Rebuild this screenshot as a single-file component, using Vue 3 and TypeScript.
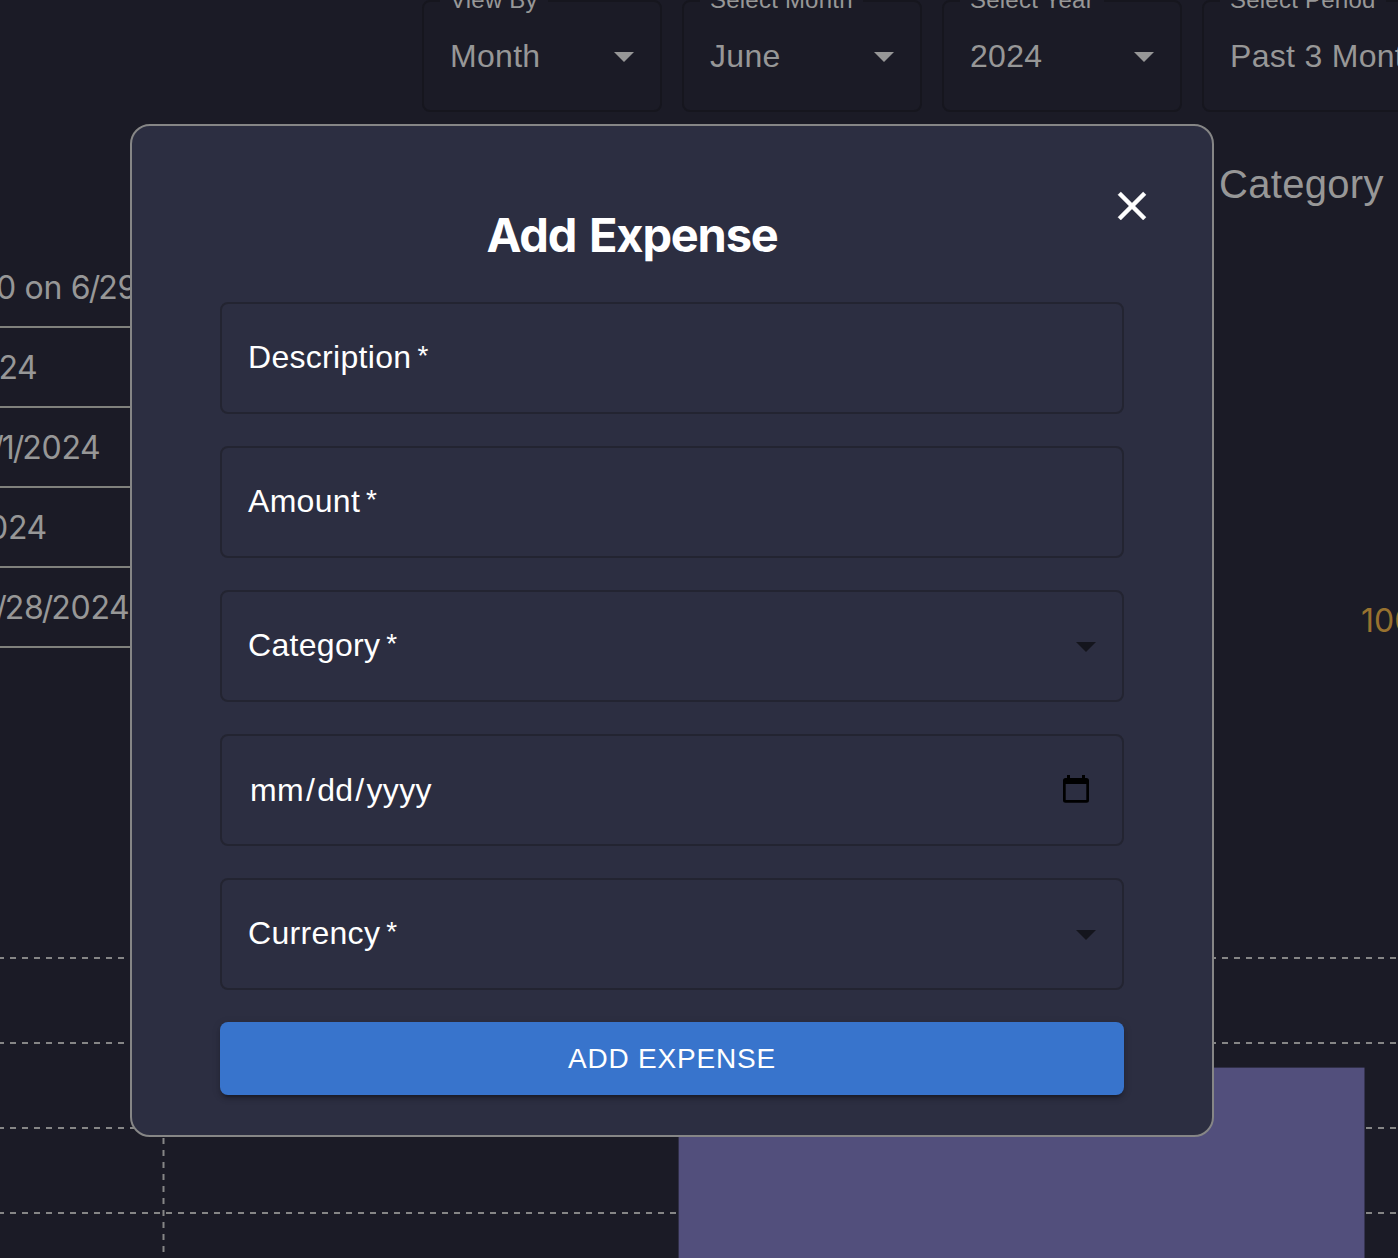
<script setup lang="ts">
interface Filter {
  label: string
  value: string
}

interface Field {
  label: string
  kind: 'text' | 'select' | 'date'
}

const filters: Filter[] = [
  { label: 'View By', value: 'Month' },
  { label: 'Select Month', value: 'June' },
  { label: 'Select Year', value: '2024' },
  { label: 'Select Period', value: 'Past 3 Months' },
]

const expenses = [
  { text: '0 on 6/29/2024', end: 223 },
  { text: '24', end: 37.5 },
  { text: '/1/2024', end: 100.5 },
  { text: '2024', end: 47 },
  { text: '/28/2024', end: 129.5 },
]

const fields: Field[] = [
  { label: 'Description', kind: 'text' },
  { label: 'Amount', kind: 'text' },
  { label: 'Category', kind: 'select' },
  { label: 'mm/dd/yyyy', kind: 'date' },
  { label: 'Currency', kind: 'select' },
]

const gridLines = [1, 86, 171, 256]

// Splits a date into alternating numbers and separators.
const parts = (text: string) => text.split(/(\/)/).filter(Boolean)
</script>

<template>
  <div class="page">
    <div class="filters">
      <div v-for="f in filters" :key="f.label" class="filter">
        <span class="filter-label">{{ f.label }}</span>
        <span>{{ f.value }}</span>
        <svg class="caret" viewBox="0 0 24 24"><path d="M7 10l5 5 5-5z" /></svg>
      </div>
    </div>

    <div class="middle">
      <ul class="expenses">
        <li v-for="e in expenses" :key="e.text">
          <span class="expense-text" :style="{ width: e.end + 'px' }"><span v-for="(p, i) in parts(e.text)" :key="i" :class="{ slash: p === '/' }">{{ p }}</span></span>
        </li>
      </ul>
      <div class="breakdown">
        <h6>Category</h6>
        <div class="slice-value">100</div>
      </div>
    </div>

    <svg class="chart" width="1398" height="301" viewBox="0 0 1398 301">
      <g stroke="#868686" stroke-width="2" stroke-dasharray="6 6">
        <line v-for="y in gridLines" :key="y" x1="-2" :y1="y" x2="1400" :y2="y" />
        <line x1="163.5" y1="1" x2="163.5" y2="301" />
      </g>
      <rect x="678.6" y="110.6" width="685.9" height="200" fill="#524f7c" />
    </svg>

    <section class="modal">
      <header>
        <h2>Add Expense</h2>
        <button class="close" type="button" aria-label="Close">
          <svg viewBox="0 0 24 24"><path d="M19 6.41 17.59 5 12 10.59 6.41 5 5 6.41 10.59 12 5 17.59 6.41 19 12 13.41 17.59 19 19 17.59 13.41 12z" /></svg>
        </button>
      </header>
      <form @submit.prevent>
        <div v-for="f in fields" :key="f.label" class="field" :class="f.kind">
          <span v-if="f.kind === 'date'"><span v-for="(p, i) in parts(f.label)" :key="i" :class="{ divider: p === '/' }">{{ p }}</span></span>
          <span v-else class="label">{{ f.label }}<i>*</i></span>
          <svg v-if="f.kind === 'select'" class="caret" viewBox="0 0 24 24"><path d="M7 10l5 5 5-5z" /></svg>
          <svg v-if="f.kind === 'date'" class="calendar" viewBox="0 0 26 28">
            <path fill-rule="evenodd" d="M4 0h3v3h12V0h3v3h1.500A2.500 2.500 0 0 1 26 5.500V25.200A2.500 2.500 0 0 1 23.500 27.700H2.500A2.500 2.500 0 0 1 0 25.200V5.500A2.500 2.500 0 0 1 2.500 3H4zM2.700 9v16h20.600V9z" />
          </svg>
        </div>
        <button class="submit" type="submit">ADD EXPENSE</button>
      </form>
    </section>
  </div>
</template>

<style>
body {
  margin: 0;
  background: #1b1b26;
}
</style>

<style scoped>
.page {
  position: relative;
  width: 1398px;
  height: 1258px;
  overflow: hidden;
  background: #1b1b26;
  color: #979797;
  font: 32px/46px "Liberation Sans", Arial, sans-serif;
  letter-spacing: 0.3px;
  white-space: nowrap;
}
.filters {
  display: flex;
  gap: 20px;
  padding-left: 422px;
}
.filter {
  position: relative;
  box-sizing: border-box;
  flex: none;
  width: 240px;
  height: 112px;
  border: 2px solid #16161e;
  border-radius: 8px;
  display: flex;
  align-items: center;
  justify-content: space-between;
  padding: 0 12px 0 26px;
}
.filter-label {
  position: absolute;
  left: 16px;
  top: -18px;
  padding: 0 10px;
  background: #1b1b26;
  font-size: 24px;
  line-height: 32px;
  letter-spacing: 0.22px;
}
.caret {
  flex: none;
  width: 48px;
  height: 48px;
  fill: currentColor;
}
.middle {
  display: flex;
  justify-content: space-between;
  height: 845px;
}
.expenses {
  list-style: none;
  margin: 0;
  padding: 136px 0 0;
  width: 600px;
  font-family: Inter, sans-serif;
  letter-spacing: -0.3px;
}
.expenses li {
  box-sizing: border-box;
  height: 80px;
  padding-top: 2px;
  border-bottom: 2px solid #80817c;
  display: flex;
  align-items: center;
}
.expense-text {
  display: flex;
  justify-content: flex-end;
  white-space: pre;
}
.slash {
  margin: 0 -1.7px;
}
.breakdown {
  width: 179px;
  display: flex;
  flex-direction: column;
}
h6 {
  margin: 48px 0 0;
  font-size: 40px;
  line-height: 48px;
  font-weight: 400;
  letter-spacing: 0.3px;
}
.slice-value {
  margin: 390px 0 0 142px;
  font-family: Inter, sans-serif;
  letter-spacing: 0;
  color: #98722f;
}
.chart {
  display: block;
}
.modal {
  position: absolute;
  left: 130px;
  top: 124px;
  box-sizing: border-box;
  width: 1084px;
  height: 1013px;
  padding: 40px;
  border: 2px solid #868686;
  border-radius: 20px;
  background: #2c2e41;
  color: #fff;
}
header {
  display: flex;
  align-items: flex-start;
  height: 136px;
}
h2 {
  flex: 1;
  margin: 39px 0 0;
  text-align: center;
  font: 680 47px/59px Inter, sans-serif;
  letter-spacing: -1.2px;
  word-spacing: 3px;
}
.close {
  width: 80px;
  height: 80px;
  padding: 16px;
  border: 0;
  background: none;
}
.close svg {
  display: block;
  width: 48px;
  height: 48px;
  fill: #fff;
  stroke: #fff;
  stroke-width: 0.25;
}
form {
  display: flex;
  flex-direction: column;
  gap: 32px;
  padding: 0 48px;
}
.field {
  box-sizing: border-box;
  height: 112px;
  border: 2px solid #232431;
  border-radius: 8px;
  padding: 0 12px 0 26px;
  display: flex;
  align-items: center;
  justify-content: space-between;
}
.label {
  padding-bottom: 2px;
}
.field i {
  margin-left: 6px;
  font-size: 28px;
  font-style: normal;
  line-height: 1;
  vertical-align: 3px;
}
.field .caret {
  color: #14151d;
}
.field.date {
  padding: 0 33px 0 28px;
}
.divider {
  margin: 0 2px;
}
.calendar {
  width: 26px;
  height: 28px;
  margin-bottom: 2px;
  fill: #000;
}
.submit {
  height: 73px;
  border: 0;
  border-radius: 8px;
  background: #3874cc;
  color: #fff;
  font: 28px/49px "Liberation Sans", Arial, sans-serif;
  letter-spacing: 0.8px;
  box-shadow: 0 6px 2px -4px rgba(0, 0, 0, 0.2), 0 4px 4px rgba(0, 0, 0, 0.14), 0 2px 10px rgba(0, 0, 0, 0.12);
}
</style>
